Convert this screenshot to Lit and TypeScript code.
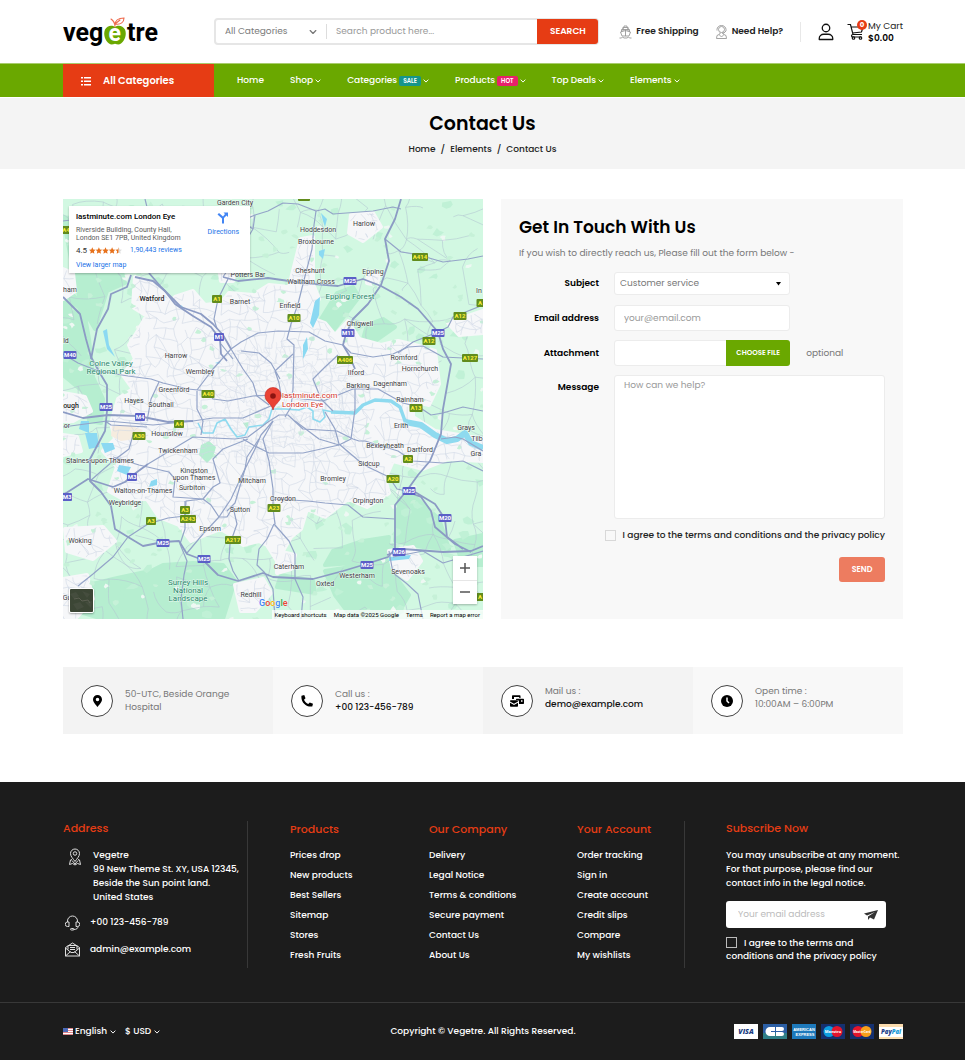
import { LitElement, html, svg, css } from "lit";
import { customElement } from "lit/decorators.js";

const base = css`
  :host { display: block; }
  * { box-sizing: border-box; }
  a { color: inherit; text-decoration: none; }
  button, input, select, textarea { font: inherit; color: inherit; letter-spacing: inherit; border: 0; background: none; padding: 0; margin: 0; }
  button { cursor: pointer; }
  select { appearance: none; cursor: pointer; }
  input[type="checkbox"] { appearance: none; }
  svg { display: block; flex: none; }
  h1, h2, h3, p, ul { margin: 0; padding: 0; }
  ul { list-style: none; }
  .wrap { padding: 0 62px 0 63px; }
`;

const chevron = (w: number) => html`<svg width=${w} height=${w} viewBox="0 0 10 10" fill="none" stroke="currentColor" stroke-width="1.6" stroke-linecap="round" stroke-linejoin="round"><path d="M1.500 3.200 5 6.800 8.500 3.200"/></svg>`;

@customElement("site-header")
class SiteHeader extends LitElement {
  static styles = [base, css`
    .top { display: flex; align-items: center; height: 63px; }
    .logo { width: 151px; }
    .search { display: flex; flex: 1; height: 27px; border: 2px solid #e6e6e6; border-radius: 4px; color: #7a7a7a; }
    .cat { position: relative; width: 110px; display: flex; align-items: center; }
    .cat select { width: 100%; height: 100%; padding-left: 9px; }
    .cat svg { position: absolute; right: 9px; pointer-events: none; }
    .search input { flex: 1; min-width: 0; border-left: 1px solid #ddd; margin: 4px 0; padding-left: 9px; outline: 0; }
    .search input::placeholder { color: #999; opacity: 1; }
    .search button { width: 61px; margin: -1px; background: #e63c14; color: #fff; font-weight: 600; border-radius: 0 3px 3px 0; }
    .links { display: flex; align-items: center; margin-left: 20px; font-weight: 600; color: #222; }
    .links a { display: flex; align-items: center; gap: 4px; white-space: nowrap; }
    .links a + a { margin-left: 16px; }
    .icons { display: flex; align-items: center; gap: 13px; margin-left: 17px; padding-left: 18px; position: relative; }
    .icons::before { content: ""; position: absolute; left: 0; top: 2px; bottom: 2px; border-left: 1px solid #e8e8e8; }
    .cart { display: flex; gap: 4px; line-height: 12px; color: #222; position: relative; white-space: nowrap; }
    .cart b { display: block; font-weight: 600; color: #000; }
    .cart svg { margin-top: 3px; }
    .count { position: absolute; left: 10px; top: 0; width: 10px; height: 10px; line-height: 10px; border-radius: 5px; background: #e63c14; color: #fff; font-size: 7px; font-weight: 700; text-align: center; }
    nav { background: #6aa800; border-top: 1px solid #a8cc6c; color: #fff; font-weight: 500; }
    .bar { display: flex; height: 33px; align-items: center; }
    .all { width: 151px; height: 100%; background: #e63c14; display: flex; align-items: center; gap: 12px; padding-left: 18px; font-weight: 600; text-align: left; font-size: 10px; }
    ul { display: flex; gap: 26px; margin-left: 23px; }
    li a { display: flex; align-items: center; gap: 2px; white-space: nowrap; }
    .tag { font-size: 6px; line-height: 10px; padding: 0 4px; border-radius: 2px; font-weight: 600; }
    .sale { background: #15958b; }
    .hot { background: #e8216b; }
  `];
  render() {
    const menu: [string, string, boolean][] = [["Home", "", false], ["Shop", "", true], ["Categories", "sale", true], ["Products", "hot", true], ["Top Deals", "", true], ["Elements", "", true]];
    return html`
      <div class="wrap top">
        <a class="logo" href="#" aria-label="Vegetre">
          <svg width="96" height="32" viewBox="0 0 96 32" font-family="Roboto, sans-serif" font-weight="700" font-size="25">
            <text x="0" y="25">veg</text><text x="64" y="25">tre</text>
            <path d="M52 11c-3-2.500-8-1.500-10 2.500-2 5 0 11 4 14 2 1.500 4 .8 6 .2 2 .6 4 1.300 6-.2 4-3 6-9 4-14-2-4-7-5-10-2.500z" fill="#6aa800"/>
            <path d="M52 11c0-3-1-6-4-8M52 9c0-4 3-7 9-7 0 4-3 7-9 6M52 8l5-4" fill="none" stroke="#ee6a4d" stroke-width="1.100" stroke-linecap="round"/>
            <text x="45.500" y="25" fill="#fff" font-size="23">e</text>
          </svg>
        </a>
        <form class="search">
          <div class="cat"><select aria-label="Category"><option>All Categories</option></select>${chevron(8)}</div>
          <input type="search" aria-label="Search product" placeholder="Search product here...">
          <button type="button">SEARCH</button>
        </form>
        <div class="links">
          <a href="#"><svg width="13" height="14" viewBox="0 0 26 28" fill="none" stroke="#999" stroke-width="1.800"><path d="M10 5V2h6v3M8 9V5h10v4M5 14V9h16v5M13 9v13M3 14l10-3 10 3-3 8H6zM8 5v7M18 5v7M1 26h4l2-2 3 2h6l3-2 2 2h4"/></svg>Free Shipping</a>
          <a href="#"><svg width="13" height="14" viewBox="0 0 26 28" fill="none" stroke="#999" stroke-width="1.800"><circle cx="13" cy="9" r="6"/><path d="M4 11V9a9 8 0 0 1 18 0v3l-4 4h-4M10 15v3l-6 3-1 6h20l-1-6-6-3v-3M9 20l4 4 4-4"/></svg>Need Help?</a>
        </div>
        <div class="icons">
          <a href="#" aria-label="Account"><svg width="16" height="18" viewBox="0 0 32 36" fill="none" stroke="#111" stroke-width="2.600"><circle cx="16" cy="10" r="7.500"/><path d="M2.500 33v-2c0-5 4-8.500 9-8.500h9c5 0 9 3.500 9 8.500v2z" stroke-linejoin="round"/></svg></a>
          <a class="cart" href="#">
            <svg width="17" height="17" viewBox="0 0 34 34" fill="none" stroke="#111" stroke-width="2.400"><path d="M1 3h6l5 20h18M8 8h24l-3 10-18 2M12 23c-4 0-4 5 0 5h17"/><circle cx="13" cy="30" r="2.500"/><circle cx="27" cy="30" r="2.500"/></svg>
            <span class="count">0</span>
            <span>My Cart<b>$0.00</b></span>
          </a>
        </div>
      </div>
      <nav><div class="wrap bar">
        <button class="all"><svg width="10" height="10" viewBox="0 0 20 20" fill="#fff"><path d="M0 2h4v3H0zM6 2h14v3H6zM0 9h4v3H0zM6 9h14v3H6zM0 16h4v3H0zM6 16h14v3H6z"/></svg>All Categories</button>
        <ul>${menu.map(([t, tag, sub]) => html`<li><a href="#">${t}${tag ? html` <span class="tag ${tag}">${tag.toUpperCase()}</span>` : ""}${sub ? chevron(6) : ""}</a></li>`)}</ul>
      </div></nav>`;
  }
}

type P = [number, number];
let seed = 7;
const rnd = () => ((seed = (seed * 16807) % 2147483647) / 2147483647);

/* Street mesh: a jittered grid whose neighbours are joined at random. */
function mesh(step: number, keep: number, jitter: number): string {
  const n = Math.ceil(420 / step) + 2;
  const pts: P[][] = [];
  for (let r = 0; r < n; r++) {
    pts.push([]);
    for (let c = 0; c < n; c++) pts[r].push([(c - 0.5) * step + (rnd() - 0.5) * jitter, (r - 0.5) * step + (rnd() - 0.5) * jitter]);
  }
  let d = "";
  const join = (a: P, b: P) => {
    const mx = (a[0] + b[0]) / 2 + (rnd() - 0.5) * step * 0.4, my = (a[1] + b[1]) / 2 + (rnd() - 0.5) * step * 0.4;
    d += `M${a[0].toFixed(1)} ${a[1].toFixed(1)}Q${mx.toFixed(1)} ${my.toFixed(1)} ${b[0].toFixed(1)} ${b[1].toFixed(1)}`;
  };
  for (let r = 0; r < n - 1; r++) for (let c = 0; c < n - 1; c++) {
    if (rnd() < keep) join(pts[r][c], pts[r][c + 1]);
    if (rnd() < keep) join(pts[r][c], pts[r + 1][c]);
    if (rnd() < keep * 0.25) join(pts[r][c], pts[r + 1][c + 1]);
  }
  return d;
}

function blobs(count: number, size: number): string {
  let d = "";
  for (let i = 0; i < count; i++) {
    const x = rnd() * 420, y = rnd() * 420;
    const k = 7;
    for (let j = 0; j < k; j++) {
      const a = (j / k) * Math.PI * 2, r = size * (0.4 + rnd());
      d += `${j ? "L" : "M"}${(x + Math.cos(a) * r).toFixed(1)} ${(y + Math.sin(a) * r * 0.8).toFixed(1)}`;
    }
    d += "Z";
  }
  return d;
}

const URBAN = "M112 98 130 92 142 106 158 104 166 94 190 96 206 86 226 88 238 40 250 38 250 85 256 100 246 118 262 124 272 136 285 122 296 140 318 146 335 142 352 146 372 152 376 185 366 206 350 202 350 218 372 232 420 240V262L385 260 360 270 330 262 322 280 326 294 304 308 285 300 262 318 244 310 238 330 228 338 214 362 204 346 196 342 180 346 168 336 158 330 142 336 128 342 116 326 96 318 84 300 60 300 46 292 54 268 40 252 52 240 48 224 55 200 70 190 60 176 72 160 66 146 76 130 84 116 100 112Z";
const TOWNS = "M72 78 92 84 112 108 92 122 70 108ZM288 16 310 14 318 28 300 42 286 34ZM0 70 10 74 12 92 0 100ZM2 330 40 328 52 342 30 360 4 352ZM0 380 24 376 30 400 12 420H0ZM172 386 200 380 208 394 192 412H178ZM326 352 350 348 358 362 344 380 330 370ZM214 352 232 356 228 370 214 374ZM0 194 22 198 28 212 10 222 0 222ZM385 124 420 112V134L396 136ZM156 66 172 70 170 82 158 82ZM0 236 14 238 18 252 0 256ZM305 74 316 76 314 86 304 84Z";
const DARK = "M0 86 20 106 26 140 30 178 40 200 38 224 26 222 24 196 0 176ZM0 18 26 22 56 62 62 84 44 92 32 130 18 106 8 60ZM274 94 290 88 296 98 276 124 264 140 258 120ZM336 300 350 296 376 320 386 350 360 348 332 342ZM262 372 300 366 330 346 328 372 346 396 332 420H290L272 396ZM100 366 130 364 160 366 172 382 160 420H56L60 386ZM0 392 50 380 96 370 96 420H40L0 408ZM392 342 420 336V366L400 366ZM304 126 320 120 332 128 312 142 300 140ZM218 376 250 382 252 394 214 388ZM270 352 300 342 326 338 324 352 290 364 262 366Z";

const MAJOR = [
  "M0 98 17 115 23 140 28 158 38 176 44 186 44 212 42 232 27 260 27 282 38 293 48 307 52 330 65 338 80 347 100 343 116 342 124 355 140 361 155 376 175 382 200 374 210 378 250 380 280 372 300 366 325 358 332 350 332 306 345 290 355 276 367 262 378 235 380 210 388 165 380 150 375 133 355 110 338 98 318 87 300 80 275 87 240 84 205 79 175 82 160 78",
  "M28 160 34 130 45 110 48 95 64 88 68 76",
  "M72 78 90 82 102 92 112 105 130 117 148 128 157 140 158 155 164 162",
  "M86 74 98 88 118 108 138 115 150 125 160 136 168 150",
  "M338 0 332 20 322 40 326 62 318 86 305 105 290 120 283 135 280 146 286 156 292 170",
  "M0 296 25 280 50 288 62 283 70 276 85 265",
  "M0 213 20 219 45 216 75 217 105 223 130 222",
  "M345 293 358 298 368 312 372 328 392 345 408 353M352 293 372 305 382 320 384 338 400 350",
  "M324 356 340 350 380 353 408 352 420 347",
];
const MINOR = [
  "M82 0 84 8M160 78 172 60 190 30 192 16 205 12 220 4 235 5 253 12 262 10 270 15 310 12 330 8 338 10",
  "M253 12 251 26 249 50 240 85 235 105 228 125 224 140 231 146 230 190 228 208 222 218",
  "M165 80 155 100 151 120 154 130",
  "M322 40 338 53 352 55 380 63 405 60 420 57",
  "M134 191 150 170 168 150 178 143 195 134 215 132 246 133 262 142 280 146 288 154 310 158 330 155 345 148 360 147 380 158 420 160",
  "M375 133 385 128 390 118 405 112 420 106M335 154 350 143 375 133",
  "M0 155 15 164 35 172 65 177 88 180 100 184 125 190 145 192 150 200 165 202 190 197 212 196 240 200 260 202 290 190 315 190 340 204 356 208 368 216 380 214 400 208 420 212",
  "M168 150 180 170 190 184 194 197 206 206M158 145 170 160M96 183 88 200 84 222M134 192 134 210 140 222 138 236",
  "M0 228 44 222 90 226 130 222 150 219 180 219 210 206",
  "M85 265 110 250 130 238 172 240 185 238 205 223",
  "M15 387 30 375 50 358 65 338 85 325 105 319 122 317 123 302 140 300 150 288 157 284 150 260 160 250 185 240",
  "M27 282 50 262 66 250 70 236M50 258 76 266 106 273 112 280 110 298 140 300M42 222 48 226 84 228",
  "M122 302 122 330 117 345 124 362 121 376 118 400 120 420",
  "M124 354 140 335 156 318 168 300 180 274 192 250 198 236 210 222",
  "M156 318 148 306 140 300M156 318 164 318 170 308 174 325 167 345 166 360 170 372 176 382",
  "M164 312 172 304 182 270 184 258 196 240",
  "M205 223 216 216 225 216 240 230 274 232 290 240 296 242 302 242 335 252 350 262 380 264 400 262 420 272",
  "M262 213 272 230 276 245 296 262 305 268 326 278 334 290 348 293M232 222 256 240 276 246 288 240 292 210 292 186",
  "M180 240 190 246 206 254 222 254 240 254 276 246M210 222 200 240 206 262 210 290 210 309",
  "M210 300 245 302 262 304 285 306 300 318 332 320",
  "M211 325 204 340 196 350 194 366 202 374M211 325 226 342 232 355 232 380 240 398 238 420M210 309 212 325",
  "M326 352 330 374 343 384 355 395 360 420M330 358 360 352 380 364 400 358 420 352",
  "M230 155 212 172 216 184 218 196M178 152 196 154 208 164 217 180M275 156 262 168 250 180 258 200 270 212",
  "M192 16 178 22 190 30M0 22 30 18 60 10 84 8M202 374 210 390 212 420",
  "M378 240 392 238 400 240 420 252",
];
const RIVER = "M135 224 140 234 150 234 154 224 162 220 168 230 174 238 182 236 186 228 200 226 206 220 209 210 222 210 236 211 244 208 250 212 250 220 257 223 262 218 260 211 270 213 292 214";
const ESTUARY = "M268 213 292 214 300 206 312 201 328 202 337 208 342 222 358 226 372 236 384 242 394 240 402 233 408 244 420 249";
const LAKES = "M18 222 26 222 26 234 16 230ZM22 234 34 234 36 248 26 250ZM38 244 50 244 52 250 42 254ZM56 266 68 268 64 276 54 272ZM88 282 94 280 94 286 86 288ZM252 102 257 98 256 116 250 129 247 124ZM240 146 244 138 245 150 240 160ZM256 52 262 50 260 60 256 56ZM258 14 264 20 262 28 260 22ZM40 132 44 130 46 146 52 158 44 150ZM326 358 348 356 346 360 326 362ZM152 164 158 162 156 165ZM118 106 122 110 116 108Z";

const PLACES: [string, number, number, string?][] = [
  ["Garden City", 172, 3], ["Potters Bar", 185, 75], ["ham", 7, 90], ["Watford", 89, 99, "b"], ["Barnet", 177, 102], ["Harrow", 113, 156], ["Wembley", 137, 172],
  ["Greenford", 111, 190], ["Hayes", 71, 201], ["Southall", 98, 205], ["ld", 3, 141], ["ough", 8, 206, "b"], ["Colne Valley", 48, 164, "g"], ["Regional Park", 48, 172, "g"],
  ["Harlow", 301, 24], ["Hoddesdon", 255, 30], ["Broxbourne", 253, 42], ["Cheshunt", 247, 71], ["Waltham Cross", 248, 82], ["Epping", 310, 72], ["Epping Forest", 287, 97, "g"],
  ["Enfield", 227, 106], ["Chigwell", 297, 124], ["Romford", 341, 158], ["Hornchurch", 357, 169], ["Ilford", 293, 173], ["Barking", 295, 186], ["Dagenham", 327, 184],
  ["Rainham", 347, 200], ["In", 416, 91], ["or", 4, 226], ["Hounslow", 104, 234], ["Twickenham", 115, 251], ["Staines-upon-Thames", 37, 261], ["Kingston", 131, 271],
  ["upon Thames", 131, 278], ["Surbiton", 129, 288], ["Walton-on-Thames", 80, 291], ["Weybridge", 62, 303], ["Mitcham", 189, 281], ["Sutton", 177, 310], ["Epsom", 147, 329],
  ["Woking", 17, 341], ["Surrey Hills", 125, 383, "g"], ["National", 125, 391, "g"], ["Landscape", 125, 399, "g"], ["Redhill", 188, 395], ["Gu", 4, 398],
  ["Erith", 338, 226], ["Grays", 403, 228], ["Tilb", 414, 239], ["Gra", 413, 254], ["Bexleyheath", 322, 246], ["Dartford", 357, 250], ["Sidcup", 306, 264],
  ["Bromley", 270, 279], ["Croydon", 220, 299], ["Orpington", 305, 301], ["Caterham", 226, 367], ["Sevenoaks", 345, 372], ["Westerham", 294, 376], ["Oxted", 262, 384],
];
const BADGES: [string, number, number][] = [
  ["M1", 156, 138], ["M40", 7, 156], ["M25", 43, 208], ["M25", 287, 82], ["M11", 285, 134], ["M25", 375, 134], ["M4", 77, 218], ["M3", 69, 278], ["M3", 4, 298],
  ["M25", 100, 344], ["M25", 141, 360], ["M25", 346, 292], ["M20", 382, 319], ["M26", 336, 353], ["M25", 304, 366],
  ["A1", 154, 100], ["A40", 145, 195], ["A10", 231, 119], ["A406", 282, 161], ["A414", 357, 58], ["A12", 397, 117], ["A12", 366, 142], ["A127", 407, 159], ["A13", 353, 209],
  ["A4", 116, 225], ["A30", 76, 237], ["A3", 122, 311], ["A243", 125, 320], ["A3", 88, 322], ["A217", 170, 341], ["A2", 345, 260], ["A20", 330, 280], ["A23", 211, 309],
  ["A", 417, 398], ["A", 417, 104], ["A4", 3, 31],
];
const FIELD_MESH = mesh(22, 0.56, 18);
const TOWN_MESH = mesh(9, 0.66, 8);
const INNER_MESH = mesh(5, 0.5, 4);
const GREENS = blobs(190, 3);
const MINTS = blobs(110, 5);
const PALES = blobs(90, 3);

@customElement("london-map")
class LondonMap extends LitElement {
  static styles = [base, css`
    :host { position: relative; font-family: Roboto, sans-serif; overflow: hidden; }
    .canvas { width: 100%; height: auto; }
    .place { font-size: 7px; fill: #3c4043; paint-order: stroke; stroke: #ffffffb0; stroke-width: 1px; text-anchor: middle; }
    .place.b { font-weight: 500; fill: #222; }
    .place.g { font-size: 8px; fill: #27876a; }
    .road { font-size: 6px; font-weight: 700; text-anchor: middle; }
    .poi { font-size: 8px; fill: #d3332b; paint-order: stroke; stroke: #fff; stroke-width: 1.5px; }
    .card { position: absolute; left: 6px; top: 7px; width: 181px; padding: 5px 11px 4px 7px; background: #fff; box-shadow: 0 1px 2px #0004; display: flex; justify-content: space-between; font-size: 7px; line-height: 8px; color: #5b5b5b; }
    .card h2 { font-size: 8px; line-height: 11px; font-weight: 500; color: #000; margin-bottom: 4px; }
    .card a { color: #1a73e8; }
    .rate { display: flex; align-items: center; gap: 2px; font-size: 8px; line-height: 9px; margin: 4px 0 6px; color: #333; }
    .rate a { margin-left: 6px; font-size: 7px; }
    .dir { display: flex; flex-direction: column; align-items: center; gap: 4px; padding-top: 1px; }
    .thumb { position: absolute; left: 6px; bottom: 6px; width: 25px; height: 25px; border: 1px solid #fff; border-radius: 2px; box-shadow: 0 1px 2px #0005; overflow: hidden; }
    .zoom { position: absolute; right: 6px; bottom: 15px; width: 24px; background: #fff; box-shadow: 0 1px 2px #0004; display: flex; flex-direction: column; }
    .zoom button { height: 24px; display: flex; align-items: center; justify-content: center; }
    .zoom button + button { box-shadow: inset 0 1px #e6e6e6; }
    .legal { position: absolute; right: 0; bottom: 0; display: flex; gap: 7px; padding: 0 3px; background: #ffffffb8; font-size: 6px; line-height: 9px; color: #000; white-space: nowrap; }
    .google { position: absolute; left: 196px; bottom: 10px; font: 500 9px/11px Roboto, sans-serif; text-shadow: 0 0 1px #fff; }
    .bl { color: #4285f4; } .rd { color: #ea4335; } .yl { color: #fbbc05; } .gn { color: #34a853; }
  `];
  render() {
    return html`
      <svg class="canvas" viewBox="0 0 420 420" role="img" aria-label="Map of London">
        <defs><clipPath id="urban"><path d="${URBAN + TOWNS}"/></clipPath><clipPath id="inner"><ellipse cx="212" cy="205" rx="80" ry="62"/></clipPath></defs>
        <rect width="420" height="420" fill="#d2f8e2"/>
        <path d=${DARK} fill="#b6eed0" stroke="#b6eed0" stroke-width="4" stroke-linejoin="round"/>
        <path d=${MINTS} fill="#c0f1d6"/>
        <path d=${PALES} fill="#eef8f3"/>
        <path d=${FIELD_MESH} fill="none" stroke="#b4c8d2" stroke-width=".6"/>
        <path d=${URBAN + TOWNS} fill="#f6f7f9" stroke="#f6f7f9" stroke-width="4" stroke-linejoin="round"/>
        <path d=${GREENS} fill="#c6f1d8"/>
        <path d="M138 246 146 242 153 248 150 258 144 264 136 256ZM180 224 186 223 184 230Z" fill="#b6eed0"/>
        <path d="M49 227 66 226 80 231 72 240 58 242 48 237Z" fill="#f6ecdf"/>
        <g clip-path="url(#urban)"><path d=${TOWN_MESH} fill="none" stroke="#d0d8e5" stroke-width=".6"/></g>
        <g clip-path="url(#inner)"><path d=${INNER_MESH} fill="none" stroke="#dde3ec" stroke-width=".5"/></g>
        <path d=${LAKES} fill="#8bd9f2"/>
        <path d=${RIVER} fill="none" stroke="#8edaef" stroke-width="1.600" stroke-linejoin="round"/>
        <path d=${ESTUARY} fill="none" stroke="#8edaef" stroke-width="3.500" stroke-linejoin="round"/>
        <path d="M342 223 358 226 372 236 384 242 394 240 402 234 408 244 420 249" fill="none" stroke="#8edaef" stroke-width="6" stroke-linejoin="round"/>
        ${MINOR.map((d) => svg`<path d=${d} fill="none" stroke="#94a4c8" stroke-width="1.200" stroke-linejoin="round"/>`)}
        ${MAJOR.map((d) => svg`<path d=${d} fill="none" stroke="#8c9bc4" stroke-width="1.800" stroke-linejoin="round"/>`)}
        ${PLACES.map(([t, x, y, k]) => svg`<text class="place ${k ?? ""}" x=${x} y=${y + 3}>${t}</text>`)}
        <rect x="235" y="-4" width="12" height="6" rx="1" fill="#628c1d"/>
        ${BADGES.map(([t, x, y]) => {
          const w = t.length * 3 + 4, m = t[0] === "M";
          return svg`<rect x=${x - w / 2} y=${y - 4} width=${w} height="8" rx="1" fill=${m ? "#5b5fc7" : "#628c1d"}/><text class="road" x=${x} y=${y + 2} fill=${m ? "#fff" : "#fdf03c"}>${t}</text>`;
        })}
        <path d="M210 211c-1-6-8-8-8-14.500a8 8 0 0 1 16 0c0 6.500-7 8.500-8 14.500z" fill="#ea4335" stroke="#c5221f" stroke-width=".6"/><circle cx="210" cy="197" r="2.800" fill="#8c1410"/>
        <text class="poi" x="219" y="199">lastminute.com</text><text class="poi" x="219" y="208">London Eye</text>
      </svg>
      <div class="card">
        <div>
          <h2>lastminute.com London Eye</h2>
          <p>Riverside Building, County Hall,<br>London SE1 7PB, United Kingdom</p>
          <div class="rate">4.5 <svg width="33" height="7" viewBox="0 0 50 10" fill="#e7711b"><path id="s" d="M5 0 6.500 3.400 10 3.800 7.400 6.200 8.100 10 5 8 1.900 10 2.600 6.200 0 3.800 3.500 3.400Z"/><use href="#s" x="10"/><use href="#s" x="20"/><use href="#s" x="30"/><path d="M45 0V8L41.900 10 42.600 6.200 40 3.800 43.500 3.400Z"/><path d="M45 0 46.500 3.400 50 3.800 47.400 6.200 48.100 10 45 8Z" fill="#ddd"/></svg><a href="#">1,90,443 reviews</a></div>
          <a href="#">View larger map</a>
        </div>
        <a class="dir" href="#"><svg width="12" height="12" viewBox="0 0 24 24" fill="#4285f4"><path d="M13 1h9v9l-3-3-5 5v11h-4V13L1 5l3-3 8 7 4-5z"/></svg>Directions</a>
      </div>
      <button class="thumb" aria-label="Satellite view"><svg width="23" height="23" viewBox="0 0 23 23"><rect width="23" height="23" fill="#3c4635"/><path d="M0 5 6 3 9 7 4 10ZM12 2 20 5 17 9ZM3 15 10 13 14 18 7 21ZM15 13 22 12 21 19Z" fill="#454d3e"/><path d="M4 10 9 9 12 12 18 11 20 14" fill="none" stroke="#5c5f52"/></svg></button>
      <div class="zoom">
        <button aria-label="Zoom in"><svg width="10" height="10" stroke="#555" stroke-width="1.500"><path d="M5 0V10M0 5H10"/></svg></button>
        <button aria-label="Zoom out"><svg width="10" height="10" stroke="#555" stroke-width="1.500"><path d="M0 5H10"/></svg></button>
      </div>
      <span class="google"><span class="bl">G</span><span class="rd">o</span><span class="yl">o</span><span class="bl">g</span><span class="gn">l</span><span class="rd">e</span></span>
      <div class="legal"><a href="#">Keyboard shortcuts</a><span>Map data ©2025 Google</span><a href="#">Terms</a><a href="#">Report a map error</a></div>`;
  }
}

@customElement("contact-form")
class ContactForm extends LitElement {
  static styles = [base, css`
    :host { background: #f8f8f8; padding: 18px; }
    h2 { font-size: 17px; line-height: 21px; font-weight: 600; color: #000; }
    p { color: #777; line-height: 14px; margin: 8px 0 12px; }
    .row { display: grid; grid-template-columns: 80px 1fr; column-gap: 15px; margin-bottom: 9px; align-items: center; }
    .row > label { text-align: right; font-weight: 600; color: #000; white-space: nowrap; }
    .field { display: flex; align-items: center; gap: 16px; color: #777; }
    .box { flex: 0 0 65%; min-width: 0; height: 26px; background: #fff; border: 1px solid #ececec; border-radius: 3px; color: #777; }
    .short { height: 23px; }
    .first { margin-bottom: 10px; }
    .sel { position: relative; }
    .sel select { width: 100%; height: 100%; padding-left: 5px; }
    .sel svg { position: absolute; right: 8px; top: 9px; pointer-events: none; }
    input.box, textarea { padding: 0 9px; }
    ::placeholder { color: #999; opacity: 1; }
    .file { display: flex; justify-content: flex-end; position: relative; }
    .file span { width: 64px; margin: -1px; background: #6aa800; color: #fff; border-radius: 0 3px 3px 0; font-size: 7px; line-height: 26px; font-weight: 600; text-align: center; white-space: nowrap; }
    .file input { position: absolute; inset: 0; width: 100%; height: 100%; opacity: 0; cursor: pointer; }
    textarea { display: block; width: 100%; height: 144px; padding-top: 3px; background: #fff; border: 1px solid #ececec; border-radius: 3px; resize: none; }
    .top { align-items: start; margin-bottom: 10px; }
    .top > label { padding-top: 6px; }
    .agree { display: flex; justify-content: flex-end; align-items: center; gap: 7px; color: #222; font-weight: 500; line-height: 12px; }
    .agree input { width: 11px; height: 11px; border: 1px solid #d8d8d8; }
    .send { display: block; margin: 16px 0 0 auto; width: 46px; height: 25px; border-radius: 3px; background: #ed7c60; color: #fff; font-weight: 600; font-size: 8px; }
  `];
  render() {
    return html`<form>
      <h2>Get In Touch With Us</h2>
      <p>If you wish to directly reach us, Please fill out the form below -</p>
      <div class="row first"><label for="subject">Subject</label><div class="field"><div class="box short sel"><select id="subject"><option>Customer service</option></select><svg width="5" height="4" viewBox="0 0 5 4"><path d="M0 0h5L2.500 3.500z"/></svg></div></div></div>
      <div class="row"><label for="email">Email address</label><div class="field"><input class="box" id="email" type="email" placeholder="your@email.com"></div></div>
      <div class="row"><label for="file">Attachment</label><div class="field"><div class="box file"><span>CHOOSE FILE</span><input id="file" type="file"></div>optional</div></div>
      <div class="row top"><label for="msg">Message</label><textarea id="msg" placeholder="How can we help?"></textarea></div>
      <label class="agree"><input type="checkbox">I agree to the terms and conditions and the privacy policy</label>
      <button class="send" type="button">SEND</button>
    </form>`;
  }
}

@customElement("info-strip")
class InfoStrip extends LitElement {
  static styles = [base, css`
    ul { display: grid; grid-template-columns: repeat(4, 1fr); }
    li { display: flex; align-items: center; gap: 12px; height: 67px; padding: 0 18px; background: #f8f8f8; line-height: 13px; color: #777; }
    li:nth-child(odd) { background: #f3f3f3; }
    .ring { width: 32px; height: 32px; border: 1px solid #444; border-radius: 50%; background: #fff; display: flex; align-items: center; justify-content: center; flex: none; }
    .up { padding-bottom: 5px; }
    a, .txt { display: block; }
    a { color: #111; font-weight: 500; }
  `];
  render() {
    return html`<ul>
      <li><span class="ring"><svg width="9" height="12" viewBox="0 0 18 24"><path fill-rule="evenodd" d="M9 0a9 9 0 0 1 9 9c0 5-6 11-9 15C6 20 0 14 0 9a9 9 0 0 1 9-9zm0 5.500a3.500 3.500 0 1 0 0 7 3.500 3.500 0 0 0 0-7z"/></svg></span><span class="txt">50-UTC, Beside Orange<br>Hospital</span></li>
      <li><span class="ring"><svg width="12" height="12" viewBox="0 0 24 24"><path d="M1 1.500 6.500 0 9 6.500 6 9.500c1.500 3.500 4.500 6.500 8.500 8.500l3-3L24 17.500 22.500 23C10 25-1 13 1 1.500z"/></svg></span><span class="txt">Call us :<a href="#">+00 123-456-789</a></span></li>
      <li><span class="ring"><svg width="14" height="12" viewBox="0 0 28 24"><path d="M4 8V2q0-1.500 1.500-1.500h14Q21 .5 21 2v4h-2.500V4H8v4z"/><path fill-rule="evenodd" d="M13 7.500h13.500q1.500 0 1.500 1.500v7.500q0 1.500-1.500 1.500H18v-5q0-3-3-3h-3V9q0-1.500 1-1.500zM22 10.500v3h3v-3z"/><path d="M0 12q0-1.500 1.500-1.500h13Q16 10.500 16 12v1l-8 4.500L0 13zM0 15.500l8 4.500 8-4.500V22q0 1.500-1.500 1.500h-13Q0 23.500 0 22z"/></svg></span><span class="txt up">Mail us :<a href="#">demo@example.com</a></span></li>
      <li><span class="ring"><svg width="12" height="12" viewBox="0 0 24 24"><circle cx="12" cy="12" r="12"/><path d="M12 5v7l4 4" stroke="#fff" stroke-width="3" fill="none"/></svg></span><span class="txt up">Open time :<br>10:00AM – 6:00PM</span></li>
    </ul>`;
  }
}

@customElement("site-footer")
class SiteFooter extends LitElement {
  static styles = [base, css`
    :host { background: #1c1c1c; color: #fff; font-weight: 500; }
    h3 { color: #e63c14; font-size: 11px; line-height: 14px; font-weight: 500; margin-bottom: 13px; }
    .cols { display: grid; grid-template-columns: minmax(0, 185fr) minmax(0, 437fr) minmax(0, 218fr); padding-top: 39px; padding-bottom: 34px; min-height: 220px; }
    .cols > * { border-right: 1px solid #383838; height: 147px; }
    .cols > :last-child { border: 0; padding-left: 41px; }
    .mid { display: grid; grid-template-columns: minmax(0, 139fr) minmax(0, 148fr) minmax(0, 107fr); padding-left: 42px; }
    .mid li { line-height: 20px; white-space: nowrap; }
    .mid h3 { margin-bottom: 9px; padding-top: 1px; white-space: nowrap; }
    .line { display: flex; align-items: center; gap: 10px; white-space: nowrap; }
    .addr { align-items: flex-start; line-height: 14px; padding-left: 4px; margin-bottom: 11px; }
    .line + .line { padding-left: 2px; margin-bottom: 12px; height: 15px; }
    .sub p { white-space: nowrap; line-height: 14px; }
    .mail { display: flex; align-items: center; height: 27px; margin: 11px 17px 9px 0; background: #fff; border-radius: 3px; padding: 0 8px 0 12px; }
    .mail input { flex: 1; min-width: 0; color: #333; font-weight: 400; outline: 0; }
    .mail input::placeholder { color: #bbb; opacity: 1; }
    .sub label { display: block; line-height: 13px; white-space: nowrap; }
    .sub label input { width: 11px; height: 11px; border: 1px solid #bbb; vertical-align: -2px; margin-right: 7px; }
    .bottom { border-top: 1px solid #383838; }
    .foot { display: grid; grid-template-columns: 1fr auto 1fr; align-items: center; height: 57px; }
    .opts { display: flex; gap: 9px; }
    .opts label, .pay { display: flex; align-items: center; }
    .opts label { gap: 2px; }
    .pay { gap: 5px; justify-content: flex-end; }
  `];
  render() {
    const cols: [string, string[]][] = [
      ["Products", ["Prices drop", "New products", "Best Sellers", "Sitemap", "Stores", "Fresh Fruits"]],
      ["Our Company", ["Delivery", "Legal Notice", "Terms & conditions", "Secure payment", "Contact Us", "About Us"]],
      ["Your Account", ["Order tracking", "Sign in", "Create account", "Credit slips", "Compare", "My wishlists"]],
    ];
    return html`
      <div class="wrap cols">
        <div>
          <h3>Address</h3>
          <div class="line addr"><svg width="16" height="18" viewBox="0 0 32 36" fill="none" stroke="#ddd" stroke-width="2"><path d="M16 27C12 21 7 17 7 11a9 9 0 0 1 18 0c0 6-5 10-9 16zM10 23l-3 1-2 9 6-2 5 3 5-3 6 2-2-9-3-1M10 25l6 7 6-7"/><circle cx="16" cy="11" r="3.500"/></svg><span>Vegetre<br>99 New Theme St. XY, USA 12345,<br>Beside the Sun point land.<br>United States</span></div>
          <div class="line"><svg width="15" height="16" viewBox="0 0 30 32" fill="none" stroke="#ddd" stroke-width="2"><path d="M5 14v-2a10 10 0 0 1 20 0v2M8 14v9H5a4 4 0 0 1 0-9zM22 14v9h3a4 4 0 0 0 0-9zM26 23q0 6-9 6"/><rect x="11" y="27" width="7" height="3" rx="1.500"/></svg><a href="#">+00 123-456-789</a></div>
          <div class="line"><svg width="15" height="15" viewBox="0 0 30 30" fill="none" stroke="#ddd" stroke-width="2"><path d="M1 11 15 2l14 9v17H1zM1 28l10-9M29 28l-10-9M1 12l11 9h6l11-9M6 15V7h18v8M10 11h10M10 15h10"/></svg><a href="#">admin@example.com</a></div>
        </div>
        <div class="mid">${cols.map(([t, l]) => html`<div><h3>${t}</h3><ul>${l.map((x) => html`<li><a href="#">${x}</a></li>`)}</ul></div>`)}</div>
        <div class="sub">
          <h3>Subscribe Now</h3>
          <p>You may unsubscribe at any moment.<br>For that purpose, please find our<br>contact info in the legal notice.</p>
          <form class="mail"><input type="email" aria-label="Your email address" placeholder="Your email address"><button type="button" aria-label="Subscribe"><svg width="14" height="10" viewBox="0 0 28 20" fill="#333"><path d="M28 0 0 7l6 4L22 4 8 13v7l4-5 8 4z"/></svg></button></form>
          <label><input type="checkbox">I agree to the terms and<br>conditions and the privacy policy</label>
        </div>
      </div>
      <div class="bottom"><div class="wrap foot">
        <div class="opts">
          <label><svg width="10" height="7" viewBox="0 0 20 14"><rect width="20" height="14" fill="#fff"/><path d="M0 1h20M0 5h20M0 9h20M0 13h20" stroke="#e0868a" stroke-width="2"/><rect width="10" height="8" fill="#4a68b5"/></svg><select aria-label="Language"><option>English</option></select>${chevron(6)}</label>
          <label><select aria-label="Currency"><option>$ USD</option></select>${chevron(6)}</label>
        </div>
        <span>Copyright © Vegetre. All Rights Reserved.</span>
        <div class="pay">
          <svg width="24" height="15" font-family="Open Sans, sans-serif" font-weight="800" font-style="italic" text-anchor="middle"><rect width="24" height="15" fill="#fff"/><text x="12" y="10" font-size="7" fill="#1a3a80">VISA</text></svg>
          <svg width="24" height="15"><rect width="24" height="15" fill="#2c5fa5"/><path d="M0 9h24v6H0z" fill="#2f7f87"/><path d="M12 7V3H7a4.500 4.500 0 0 0 0 9h5V8H8V7zM13 3h6a2 2 0 0 1 0 4h-6zM13 8h6a2 2 0 0 1 0 4h-6z" fill="#fff"/></svg>
          <svg width="24" height="15" font-family="Liberation Sans, sans-serif" font-weight="700" text-anchor="middle" fill="#fff"><rect width="24" height="15" fill="#1d79bb"/><text x="12" y="7" font-size="4">AMERICAN</text><text x="13" y="12" font-size="4">EXPRESS</text></svg>
          <svg width="24" height="15" font-family="Open Sans, sans-serif" font-weight="700" text-anchor="middle"><rect width="24" height="15" fill="#15306f"/><circle cx="8" cy="7.500" r="5.500" fill="#0d9de0"/><circle cx="16" cy="7.500" r="5.500" fill="#e3142c"/><text x="12" y="9" font-size="4" fill="#fff">Maestro</text></svg>
          <svg width="24" height="15" font-family="Open Sans, sans-serif" font-weight="700" text-anchor="middle"><rect width="24" height="15" fill="#15306f"/><circle cx="8" cy="7.500" r="5.500" fill="#e3142c"/><circle cx="16" cy="7.500" r="5.500" fill="#f79e1b"/><text x="12" y="9" font-size="3" fill="#fff">MasterCard</text></svg>
          <svg width="24" height="15" font-family="Open Sans, sans-serif" font-weight="800" font-style="italic" text-anchor="middle"><rect width="24" height="15" fill="#fff"/><path d="M0 0h24v3H0zM0 13h24v2H0z" fill="#fbdcae"/><text x="12" y="10" font-size="6" fill="#1f3f8a">Pay<tspan fill="#1a9bd7">Pal</tspan></text></svg>
        </div>
      </div></div>`;
  }
}

@customElement("app-root")
class AppRoot extends LitElement {
  static styles = [base, css`
    :host { display: block; background: #fff; font: 400 9px/13px Poppins, Inter, sans-serif; color: #222; }
    .title { background: #f4f4f4; border-top: 1px solid #fff; height: 72px; text-align: center; padding-top: 12px; }
    h1 { font-size: 19px; line-height: 27px; font-weight: 600; color: #000; }
    .crumbs { display: flex; justify-content: center; gap: 5px; margin-top: 6px; font-weight: 500; }
    .contact { display: grid; grid-template-columns: minmax(0, 420fr) minmax(0, 402fr); gap: 18px; margin: 30px 0 48px; }
    .strip { margin-bottom: 48px; }
  `];
  render() {
    return html`
      <site-header></site-header>
      <div class="title"><h1>Contact Us</h1><div class="crumbs"><a href="#">Home</a><span>/</span><a href="#">Elements</a><span>/</span><span>Contact Us</span></div></div>
      <main>
        <div class="wrap contact"><london-map></london-map><contact-form></contact-form></div>
        <div class="wrap strip"><info-strip></info-strip></div>
      </main>
      <site-footer></site-footer>`;
  }
}
